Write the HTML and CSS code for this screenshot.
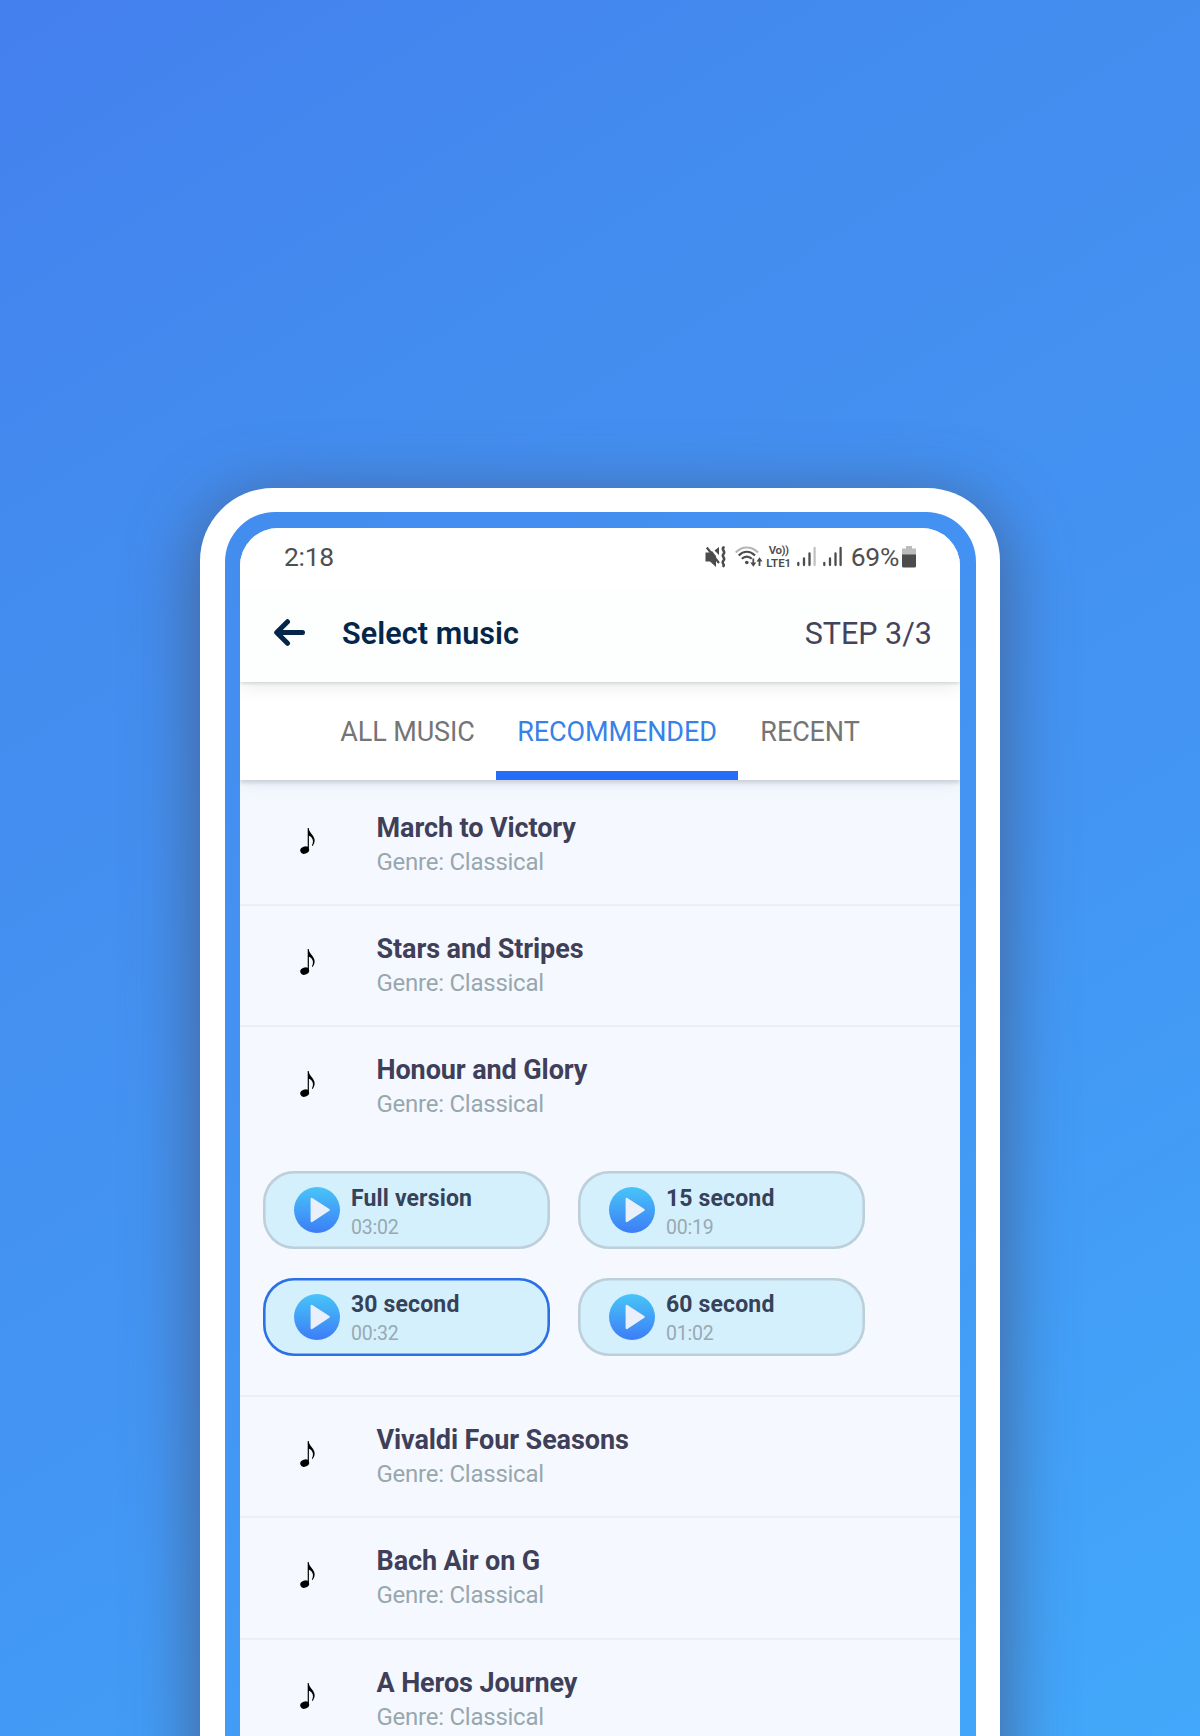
FILE: index.html
```
<!DOCTYPE html>
<html lang="en">
<head>
<meta charset="utf-8">
<title>Select music</title>
<link rel="stylesheet" href="styles.css">
</head>
<body>
<svg class="defs" width="0" height="0" aria-hidden="true">
  <defs>
    <linearGradient id="play-fill" x1="0" y1="0" x2="0" y2="1">
      <stop offset="0" stop-color="#48c5f7"/>
      <stop offset="1" stop-color="#3c7df7"/>
    </linearGradient>
    <symbol id="note" viewBox="0 0 16 28">
      <ellipse cx="4.700" cy="23.100" rx="4.500" ry="3.600" transform="rotate(-18 4.700 23.100)"/>
      <path d="M7.700 1h1c.2 3.300 2.300 5.100 4.100 7.500 2.700 3.700 2.300 7.200-.2 10.400l-.7-.3c1.500-3.300 1.500-5.600-.2-7.800C10.900 9.600 9.900 8.900 8.900 8.700v14.600H7.700z"/>
    </symbol>
    <symbol id="play" viewBox="0 0 46 46">
      <circle cx="23" cy="23" r="23" fill="url(#play-fill)"/>
      <path d="M17.700 11.800l17 11-17 11.200z" fill="#e9effb" stroke="#e9effb" stroke-width="2.200" stroke-linejoin="round"/>
    </symbol>
  </defs>
</svg>
<main class="stage">
  <div class="phone">
    <div class="bezel">
      <div class="screen">
        <div class="status">
          <span class="clock">2:18</span>
          <div class="indicators">
            <svg class="mute" viewBox="0 0 22 22" width="22" height="22">
              <path d="M.5 6.500H5L7 5l4 5v11l-6-5.500H.5z M9.500 4.500L14 1v8z" fill="#4c4c4c"/>
              <path d="M1.800 1.500L14 17" stroke="#4c4c4c" stroke-width="2.200"/>
              <path d="M18.500 1.500c-2.500 2.500 2.500 3.500 0 6.500s2.500 3.500 0 6.500 1.500 4 0 5.500" fill="none" stroke="#4c4c4c" stroke-width="2.600" stroke-linecap="round"/>
            </svg>
            <svg class="wifi" viewBox="0 0 28 22" width="28" height="22">
              <g fill="none" stroke="#4c4c4c" stroke-width="2.200">
                <path d="M.7 6.500C7-.2 16.500-.2 23 6.500" stroke="#b5b5b5"/>
                <path d="M3.700 9.500c5-5 11.300-5 16.300 0M6.800 12.800c3-3 7-3 10 0"/>
                <path d="M18.300 12.500v6M24.500 20v-6" stroke-width="1.800"/>
              </g>
              <circle cx="11.800" cy="16.500" r="1.800" fill="#4c4c4c"/>
              <path d="M15.300 16.500h6l-3 4.200zM21.500 15.500h6l-3-4.200z" fill="#4c4c4c"/>
            </svg>
            <span class="volte"><span class="vo">Vo))</span><span class="lte">LTE1</span></span>
            <svg class="signal" viewBox="0 0 19 21" width="19" height="21">
              <g stroke="#4c4c4c" stroke-width="2.300" stroke-linecap="round"><path d="M1.300 17v2M7 12.500V19M12.500 7.500V19"/><path d="M17.600 2v17" stroke="#c2c2c2"/></g>
            </svg>
            <svg class="signal signal-2" viewBox="0 0 19 21" width="19" height="21">
              <path d="M1.300 17v2M7 12.500V19M12.500 7.500V19M17.600 2v17" stroke="#4c4c4c" stroke-width="2.300" stroke-linecap="round"/>
            </svg>
            <span class="percent">69%</span>
            <svg class="battery" viewBox="0 0 14 22" width="14" height="22">
              <path d="M4 0h6v2.500h4V9H0V2.500h4z" fill="#bcbcbc"/><path d="M0 8.500h14V20q0 1.500-1.500 1.500h-11Q0 21.500 0 20z" fill="#4c4c4c"/>
            </svg>
          </div>
        </div>
        <header class="topbar">
          <svg class="back" viewBox="0 0 31 27" width="31" height="27"><path d="M28.500 13.500H3M13.500 2.700L2.700 13.500l10.800 10.800" fill="none" stroke="#03264a" stroke-width="5" stroke-linecap="round" stroke-linejoin="round"/></svg>
          <h1 class="heading">Select music</h1>
          <span class="step">STEP 3/3</span>
        </header>
        <nav class="tabs">
          <a class="tab tab-all">ALL MUSIC</a>
          <a class="tab tab-active">RECOMMENDED</a>
          <a class="tab tab-recent">RECENT</a>
        </nav>
        <div class="list">
          <section class="track"><svg class="note"><use href="#note"/></svg><div class="info"><h2 class="title">March to Victory</h2><p class="genre">Genre: Classical</p></div></section>
          <section class="track"><svg class="note"><use href="#note"/></svg><div class="info"><h2 class="title">Stars and Stripes</h2><p class="genre">Genre: Classical</p></div></section>
          <section class="track track-open"><svg class="note"><use href="#note"/></svg><div class="info"><h2 class="title">Honour and Glory</h2><p class="genre">Genre: Classical</p></div></section>
          <div class="versions">
            <div class="chip"><svg class="play"><use href="#play"/></svg><div class="chip-text"><b class="name">Full version</b><span class="time">03:02</span></div></div>
            <div class="chip"><svg class="play"><use href="#play"/></svg><div class="chip-text"><b class="name">15 second</b><span class="time">00:19</span></div></div>
            <div class="chip chip-selected"><svg class="play"><use href="#play"/></svg><div class="chip-text"><b class="name">30 second</b><span class="time">00:32</span></div></div>
            <div class="chip"><svg class="play"><use href="#play"/></svg><div class="chip-text"><b class="name">60 second</b><span class="time">01:02</span></div></div>
          </div>
          <section class="track"><svg class="note"><use href="#note"/></svg><div class="info"><h2 class="title">Vivaldi Four Seasons</h2><p class="genre">Genre: Classical</p></div></section>
          <section class="track"><svg class="note"><use href="#note"/></svg><div class="info"><h2 class="title">Bach Air on G</h2><p class="genre">Genre: Classical</p></div></section>
          <section class="track"><svg class="note"><use href="#note"/></svg><div class="info"><h2 class="title">A Heros Journey</h2><p class="genre">Genre: Classical</p></div></section>
        </div>
      </div>
    </div>
  </div>
</main>
</body>
</html>
```
FILE: styles.css
```
:root { --sky: linear-gradient(148deg, #4480ee 0%, #438cef 24%, #4395f4 60%, #42a8fa 100%); }
* { box-sizing: border-box; }
body { margin: 0; font-family: Roboto, sans-serif; }
.defs { display: block; }
h1, h2, p { margin: 0; }
.stage { height: 1736px; overflow: hidden; padding: 487.5px 200px 0; background: var(--sky) fixed; }
.phone { height: 1400px; padding: 24.5px; background: #fff; border-radius: 73px; box-shadow: 0 14px 60px 10px rgba(68, 98, 145, .8); }
.bezel { height: 1350px; padding: 15.5px; background: var(--sky) fixed; border-radius: 50px; }
.screen { height: 1320px; overflow: hidden; background: #f5f9ff; border-radius: 38px; }

.status { position: relative; z-index: 3; display: flex; justify-content: space-between; height: 62px; padding: 0 44px; background: #fff; color: #4f4f4f; font-size: 26.500px; line-height: 58px; letter-spacing: -.3px; }
.indicators { display: flex; align-items: center; height: 58px; }
.wifi { margin-left: 8px; }
.volte { display: flex; flex-direction: column; align-items: center; width: 28px; margin-left: 2px; font-size: 11.500px; font-weight: 600; line-height: 14px; color: #4c4c4c; }
.vo { height: 12px; line-height: 12px; letter-spacing: -.5px; }
.lte { height: 14px; letter-spacing: 0; }
.signal { margin-left: 4px; }
.signal-2 { margin-left: 7px; }
.percent { margin: 0 3px 0 9px; }

.topbar { position: relative; display: flex; align-items: center; height: 92px; padding: 0 28px 6px 34px; background: #fdfefe; box-shadow: 0 1px 4px rgba(0, 0, 0, .16), 0 5px 18px rgba(0, 0, 0, .08); z-index: 2; }
.heading { flex: 1; margin-left: 37px; padding-top: 2px; color: #03264a; font-size: 30.500px; font-weight: 600; line-height: 40px; letter-spacing: .08px; }
.step { padding-top: 2px; color: #45435c; font-size: 30.500px; line-height: 40px; }

.tabs { position: relative; display: flex; height: 98px; padding-left: 78px; background: #fff; box-shadow: 0 3px 4px rgba(0, 0, 0, .13), 0 4px 18px rgba(60, 80, 140, .09); z-index: 1; }
.tab { display: flex; align-items: center; justify-content: center; padding-top: 2px; color: #757575; font-size: 27px; letter-spacing: -.1px; }
.tab-all { width: 179px; }
.tab-active { width: 242px; margin-left: -1px; color: #3781e8; border-bottom: 9px solid #256df8; padding-top: 11px; }
.tab-recent { width: 144px; }

.list { padding-top: 5px; }
.track { display: flex; height: 121.300px; padding: 26px 0 0 60px; border-bottom: 2px solid #eceff4; }
.track-open { height: 121px; border-bottom: 0; }
.note { width: 16px; height: 28px; margin-top: 16.500px; }
.info { margin-left: 60.500px; }
.title { color: #403f59; font-size: 27px; font-weight: 700; line-height: 34px; letter-spacing: -.1px; }
.genre { color: #98a7ae; font-size: 24px; line-height: 35px; letter-spacing: -.25px; }

.versions { display: grid; grid-template-columns: 287px 287px; gap: 28.500px 28px; height: 249px; padding: 23px 0 0 23px; grid-auto-rows: 78px; border-bottom: 2px solid #eceff4; }
.chip { display: flex; align-items: center; padding-left: 31px; background: #d5f0fd; border-radius: 31px; box-shadow: inset 0 0 0 2.600px #bdd0da; }
.chip-selected { box-shadow: inset 0 0 0 2.600px #2c70e6; }
.play { width: 46px; height: 46px; }
.chip-text { display: flex; flex-direction: column; margin-left: 11px; padding-top: 5px; }
.name { color: #36425a; font-size: 23px; line-height: 29px; letter-spacing: .15px; }
.time { color: #98a9b2; font-size: 19.500px; line-height: 29px; letter-spacing: -.2px; }
```
